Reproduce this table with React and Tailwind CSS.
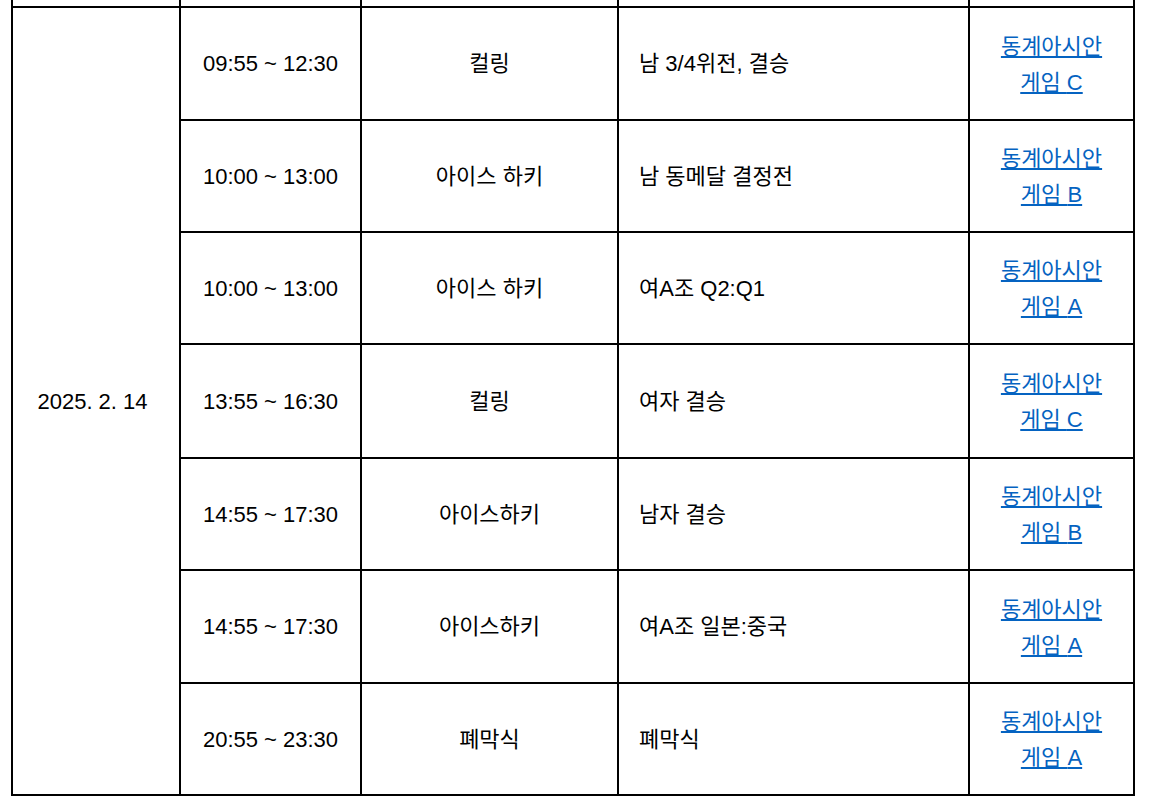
import React from "react";

const rows = [
  { h: "h-[113px]", time: "09:55 ~ 12:30", sport: "컬링", desc: "남 3/4위전, 결승", venue: "C" },
  { h: "h-[112px]", time: "10:00 ~ 13:00", sport: "아이스 하키", desc: "남 동메달 결정전", venue: "B" },
  { h: "h-[112px]", time: "10:00 ~ 13:00", sport: "아이스 하키", desc: "여A조 Q2:Q1", venue: "A" },
  { h: "h-[114px]", time: "13:55 ~ 16:30", sport: "컬링", desc: "여자 결승", venue: "C" },
  { h: "h-[112px]", time: "14:55 ~ 17:30", sport: "아이스하키", desc: "남자 결승", venue: "B" },
  { h: "h-[113px]", time: "14:55 ~ 17:30", sport: "아이스하키", desc: "여A조 일본:중국", venue: "A" },
  { h: "h-[112px]", time: "20:55 ~ 23:30", sport: "폐막식", desc: "폐막식", venue: "A" },
];

const cell = "border-r-2 border-b-2 border-black p-0";

export default function App() {
  return (
    <div
      className="w-[1152px] h-[810px] overflow-hidden bg-white text-black text-[22px]"
      style={{ fontFamily: '"Liberation Sans", Arial, "Noto Sans CJK KR", sans-serif' }}
    >
      <table className="ml-[11px] border-separate border-spacing-0 border-l-2 border-black table-fixed w-[1124px]">
        <colgroup>
          <col className="w-[168px]" />
          <col className="w-[181px]" />
          <col className="w-[257px]" />
          <col className="w-[351px]" />
          <col className="w-[165px]" />
        </colgroup>
        <tbody>
          <tr className="h-[8px]">
            <td className={cell}></td>
            <td className={cell}></td>
            <td className={cell}></td>
            <td className={cell}></td>
            <td className={cell}></td>
          </tr>
          {rows.map((r, i) => (
            <tr key={i} className={r.h}>
              {i === 0 && (
                <td rowSpan={7} className={`${cell} pr-[7px] text-center align-middle`}>
                  2025. 2. 14
                </td>
              )}
              <td className={`${cell} text-center align-middle`}>{r.time}</td>
              <td className={`${cell} text-center align-middle`}>{r.sport}</td>
              <td className={`${cell} pl-5 text-left align-middle`}>{r.desc}</td>
              <td className={`${cell} px-3 pt-[2px] text-center align-middle leading-[36px] break-keep`}>
                <a href="#" className="text-[#0563c1] underline">
                  동계아시안 게임 {r.venue}
                </a>
              </td>
            </tr>
          ))}
        </tbody>
      </table>
    </div>
  );
}
